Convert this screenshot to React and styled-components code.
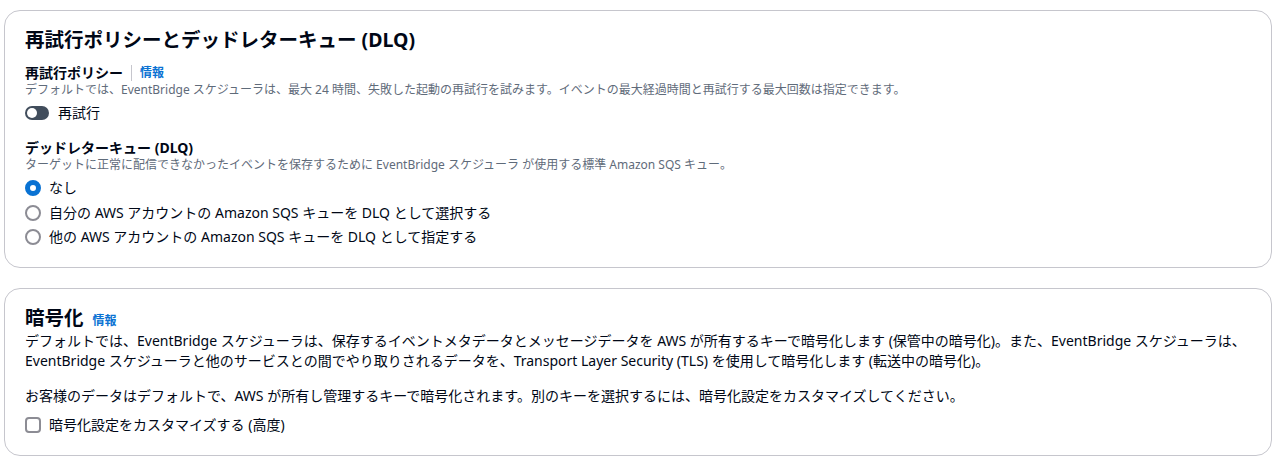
import React from "react";
import styled, { createGlobalStyle } from "styled-components";

const Global = createGlobalStyle`
  html, body { margin: 0; padding: 0; background: #ffffff; }
  body {
    font-family: "Noto Sans", "Noto Sans CJK JP", sans-serif;
    color: #000716;
    -webkit-font-smoothing: antialiased;
  }
`;

const Page = styled.div`
  display: flex;
  flex-direction: column;
  gap: 20px;
  padding: 10px 6px 0 4px;
`;

const Card = styled.section`
  border: 1px solid #c6c6cd;
  border-radius: 16px;
  background: #fff;
  padding: 18px 20px 20px 20px;
  display: flex;
  flex-direction: column;
`;

const Heading = styled.h2`
  margin: 0;
  font-size: 19.5px;
  line-height: 22px;
  font-weight: 700;
  display: flex;
  align-items: baseline;
  gap: 9px;
`;

const InfoLink = styled.a`
  color: #0972d3;
  font-size: 12px;
  font-weight: 700;
  text-decoration: none;
  line-height: 16px;
`;

const Field = styled.div`
  display: flex;
  flex-direction: column;
  margin-top: ${(p) => p.$mt || 0}px;
`;

const Label = styled.div`
  font-size: 14px;
  line-height: 18px;
  font-weight: 700;
  display: flex;
  align-items: center;
`;

const Divider = styled.span`
  display: inline-block;
  width: 1px;
  height: 16px;
  background: #c6c6cd;
  margin: 0 8px 0 8px;
`;

const Desc = styled.div`
  font-size: 12px;
  line-height: 16px;
  color: #5f6b7a;
`;

const Body = styled.p`
  margin: ${(p) => p.$mt || 0}px 0 0 0;
  font-size: 14px;
  line-height: 20px;
`;

const Row = styled.label`
  display: flex;
  align-items: center;
  gap: ${(p) => p.$gap || 8}px;
  font-size: 14px;
  line-height: 20px;
  margin-top: ${(p) => p.$mt || 0}px;
`;

const Toggle = styled.span`
  position: relative;
  width: 24px;
  height: 14px;
  border-radius: 7px;
  background: #414d5c;
  flex: none;
  &::after {
    content: "";
    position: absolute;
    left: 2px;
    top: 2px;
    width: 10px;
    height: 10px;
    border-radius: 50%;
    background: #fff;
  }
`;

const Radio = styled.span`
  width: 16px;
  height: 16px;
  box-sizing: border-box;
  border-radius: 50%;
  flex: none;
  border: ${(p) => (p.$checked ? "5px solid #0972d3" : "2px solid #8c8c94")};
  background: #fff;
`;

const Checkbox = styled.span`
  width: 16px;
  height: 16px;
  box-sizing: border-box;
  border-radius: 4px;
  border: 2px solid #8c8c94;
  background: #fff;
  flex: none;
`;

export default function App() {
  return (
    <>
      <Global />
      <Page>
        <Card>
          <Heading>再試行ポリシーとデッドレターキュー (DLQ)</Heading>
          <Field $mt={13}>
            <Label>
              再試行ポリシー
              <Divider />
              <InfoLink href="#">情報</InfoLink>
            </Label>
            <Desc>
              デフォルトでは、EventBridge スケジューラは、最大 24 時間、失敗した起動の再試行を試みます。イベントの最大経過時間と再試行する最大回数は指定できます。
            </Desc>
            <Row $mt={5} $gap={9}>
              <Toggle />
              再試行
            </Row>
          </Field>
          <Field $mt={16}>
            <Label>デッドレターキュー (DLQ)</Label>
            <Desc>
              ターゲットに正常に配信できなかったイベントを保存するために EventBridge スケジューラ が使用する標準 Amazon SQS キュー。
            </Desc>
            <Row $mt={5}>
              <Radio $checked />
              なし
            </Row>
            <Row $mt={5}>
              <Radio />
              自分の AWS アカウントの Amazon SQS キューを DLQ として選択する
            </Row>
            <Row $mt={4}>
              <Radio />
              他の AWS アカウントの Amazon SQS キューを DLQ として指定する
            </Row>
          </Field>
        </Card>
        <Card>
          <Heading>
            暗号化
            <InfoLink href="#">情報</InfoLink>
          </Heading>
          <Body $mt={2}>
            デフォルトでは、EventBridge スケジューラは、保存するイベントメタデータとメッセージデータを AWS が所有するキーで暗号化します (保管中の暗号化)。また、EventBridge スケジューラは、EventBridge スケジューラと他のサービスとの間でやり取りされるデータを、Transport Layer Security (TLS) を使用して暗号化します (転送中の暗号化)。
          </Body>
          <Body $mt={15}>
            お客様のデータはデフォルトで、AWS が所有し管理するキーで暗号化されます。別のキーを選択するには、暗号化設定をカスタマイズしてください。
          </Body>
          <Row $mt={9}>
            <Checkbox />
            暗号化設定をカスタマイズする (高度)
          </Row>
        </Card>
      </Page>
    </>
  );
}
